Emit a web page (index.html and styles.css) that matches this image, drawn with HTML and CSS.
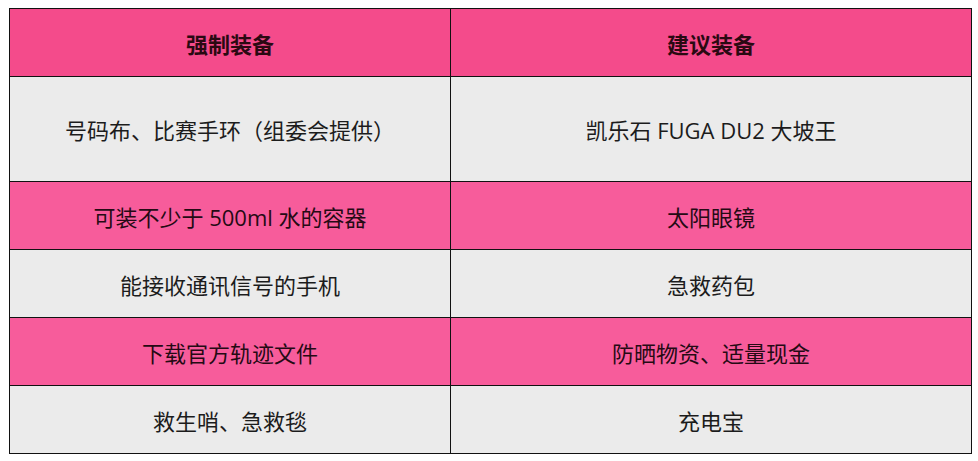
FILE: index.html
```html
<!DOCTYPE html>
<html lang="zh-CN">
<head>
<meta charset="utf-8">
<link rel="stylesheet" href="styles.css">
</head>
<body>
<table class="gear">
  <colgroup><col class="c1"><col class="c2"></colgroup>
  <thead>
    <tr class="head"><th>强制装备</th><th>建议装备</th></tr>
  </thead>
  <tbody>
    <tr class="gray tall"><td>号码布、比赛手环（组委会提供）</td><td>凯乐石 FUGA DU2 大坡王</td></tr>
    <tr class="pink"><td>可装不少于 500ml 水的容器</td><td>太阳眼镜</td></tr>
    <tr class="gray"><td>能接收通讯信号的手机</td><td>急救药包</td></tr>
    <tr class="pink"><td>下载官方轨迹文件</td><td>防晒物资、适量现金</td></tr>
    <tr class="gray"><td>救生哨、急救毯</td><td>充电宝</td></tr>
  </tbody>
</table>
</body>
</html>
```
FILE: styles.css
```css
html, body { margin: 0; padding: 0; background: #ffffff; }
body { padding: 8px 0 0 9px; }
.gear {
  border-collapse: collapse;
  width: 962px;
  table-layout: fixed;
  font-family: "Open Sans", "Noto Sans CJK SC", sans-serif;
  font-size: 22px;
  color: #1c1c1c;
}
.c1 { width: 441px; }
.c2 { width: 521px; }
.gear th, .gear td {
  border: 1px solid #111;
  text-align: center;
  vertical-align: middle;
  padding: 0;
}
.gear tr { height: 68px; }
.gear tr.tall { height: 105px; }
.head th {
  background: #f44b8b;
  font-weight: bold;
  color: #2a0912;
  font-family: "Noto Sans CJK SC", sans-serif;
  font-size: 22px;
}
.pink td { background: #f75c9b; color: #250a14; }
.gray td { background: #ebebeb; }
```
